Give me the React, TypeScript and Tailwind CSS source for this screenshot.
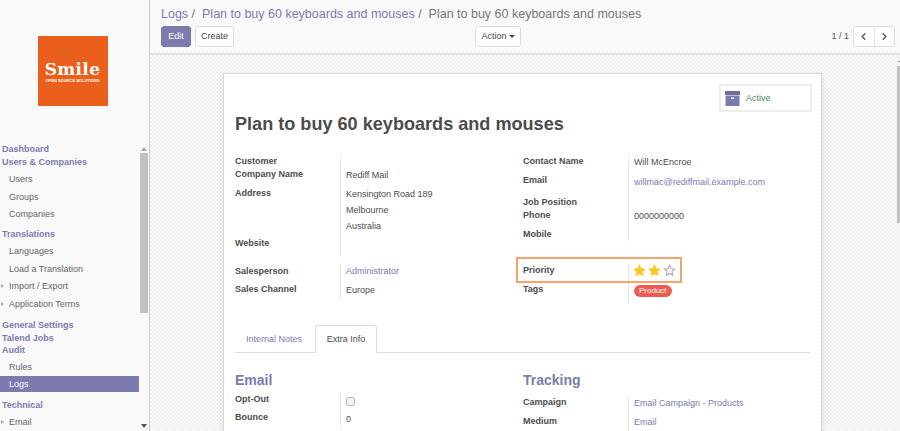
import { ChevronLeft, ChevronRight } from 'lucide-react'

const font = { fontFamily: '"Liberation Sans", Arial, sans-serif' }

function NavHead({ children }: { children: string }) {
  return <div className="h-[12.5px] pl-[2px] text-[9px] font-bold leading-[12.5px] text-[#7c7bad]">{children}</div>
}

function NavItem({ children, arrow, active }: { children: string; arrow?: boolean; active?: boolean }) {
  return (
    <div className={active ? 'mb-[1.5px] h-[16px] bg-[#7c7bad] pl-[9px] text-[9px] leading-[16px] text-white' : 'relative h-[17.5px] pl-[9px] text-[9px] leading-[17px] text-[#666]'}>
      {arrow && <span className="absolute left-[1px] top-[6px] h-0 w-0 border-y-[2.5px] border-l-[3px] border-y-transparent border-l-[#aaa]" />}
      {children}
    </div>
  )
}

function Sidebar() {
  return (
    <aside className="flex h-full w-[150px] shrink-0 flex-col border-r border-[#ccc] bg-[#f9f9f9]">
      <div className="flex h-[143px] shrink-0 items-start justify-center pr-[4px] pt-[36px]">
        <div className="flex h-[70px] w-[70px] flex-col items-center justify-center bg-[#ea5f1c] pt-[2px] text-white">
          <div className="text-[17px] font-bold leading-[17px] tracking-[0.3px]" style={{ fontFamily: '"DejaVu Serif", serif' }}>Smile</div>
          <div className="whitespace-nowrap text-[4px] font-bold leading-[6px]">OPEN SOURCE SOLUTIONS</div>
        </div>
      </div>
      <div className="flex min-h-0 flex-1">
        <nav className="w-[139px] shrink-0">
          <NavHead>Dashboard</NavHead>
          <NavHead>Users &amp; Companies</NavHead>
          <div className="mt-[3px]">
            <NavItem>Users</NavItem>
            <NavItem>Groups</NavItem>
            <NavItem>Companies</NavItem>
          </div>
          <div className="mt-[4px]"><NavHead>Translations</NavHead></div>
          <div className="mt-[3px]">
            <NavItem>Languages</NavItem>
            <NavItem>Load a Translation</NavItem>
            <NavItem arrow>Import / Export</NavItem>
            <NavItem arrow>Application Terms</NavItem>
          </div>
          <div className="mt-[6px]">
            <NavHead>General Settings</NavHead>
            <NavHead>Talend Jobs</NavHead>
            <NavHead>Audit</NavHead>
          </div>
          <div className="mt-[2px]">
            <NavItem>Rules</NavItem>
            <NavItem active>Logs</NavItem>
          </div>
          <div className="mt-[7px]"><NavHead>Technical</NavHead></div>
          <div className="mt-[2px]"><NavItem arrow>Email</NavItem></div>
        </nav>
        <div className="flex w-[10px] shrink-0 flex-col items-center pr-[1px] pt-[1px]">
          <div className="mt-[3px] h-0 w-0 border-x-[3px] border-b-[4px] border-x-transparent border-b-[#aaa]" />
          <div className="mt-[2px] h-[160px] w-[8px] shrink-0 bg-[#c1c1c1]" />
          <div className="flex-1" />
          <div className="mb-[3px] h-0 w-0 border-x-[3px] border-t-[4px] border-x-transparent border-t-[#555]" />
        </div>
      </div>
    </aside>
  )
}

function Button({ children, className = '' }: { children: React.ReactNode; className?: string }) {
  return (
    <div className={`flex h-[21px] items-center justify-center rounded-[3px] border text-[9px] ${className}`}>
      {children}
    </div>
  )
}

function ControlPanel() {
  return (
    <header className="h-[55px] shrink-0 border-b-2 border-[#e2e2e2] bg-[#f9f9f9] pl-[11px] pr-[5px]">
      <div className="flex h-[26px] items-center whitespace-pre pt-[3px] text-[12.5px] text-[#7c7bad]">
        <span>Logs</span>
        <span className="text-[#777]"> /  </span>
        <span>Plan to buy 60 keyboards and mouses</span>
        <span className="text-[#777]"> /  </span>
        <span className="text-[#777]">Plan to buy 60 keyboards and mouses</span>
      </div>
      <div className="flex h-[21px] items-center">
        <Button className="w-[30px] border-[#7c7bad] bg-[#7c7bad] text-white">Edit</Button>
        <Button className="ml-[4px] w-[39px] border-[#dcdcdc] bg-white text-[#444]">Create</Button>
        <Button className="ml-[241px] w-[46px] border-[#dcdcdc] bg-white text-[#444]">
          Action
          <span className="ml-[2px] h-0 w-0 border-x-[3px] border-t-[3px] border-x-transparent border-t-[#444]" />
        </Button>
        <div className="ml-auto mr-[4px] text-[9px] text-[#555]">1 / 1</div>
        <div className="flex h-[21px] w-[42px] rounded-[3px] border border-[#dcdcdc] bg-white text-[#555]">
          <div className="flex flex-1 items-center justify-center border-r border-[#e5e5e5]"><ChevronLeft size={11} strokeWidth={3} /></div>
          <div className="flex flex-1 items-center justify-center"><ChevronRight size={11} strokeWidth={3} /></div>
        </div>
      </div>
    </header>
  )
}

function Field({ label, h, labelTop = 0, valueTop = 0, children }: { label?: string; h: number; labelTop?: number; valueTop?: number; children?: React.ReactNode }) {
  return (
    <div className="flex" style={{ height: h }}>
      <div className="w-[105px] shrink-0 text-[9px] font-bold leading-[13px] text-[#4c4c4c]" style={{ paddingTop: labelTop }}>{label}</div>
      <div className="flex-1 border-l border-[#e8e8e8] pl-[5px] text-[9px] leading-[13px] text-[#4c4c4c]" style={{ paddingTop: valueTop }}>{children}</div>
    </div>
  )
}

function Star({ filled }: { filled?: boolean }) {
  return (
    <svg width="13" height="13" viewBox="0 0 24 24" fill={filled ? '#fbc91e' : 'none'} stroke={filled ? '#fbc91e' : '#aaa'} strokeWidth="2">
      <path d="M12 2.5l2.9 6.2 6.7.8-5 4.6 1.4 6.7-6-3.4-6 3.4 1.4-6.7-5-4.6 6.7-.8z" />
    </svg>
  )
}

function Sheet() {
  return (
    <div className="relative ml-[73px] h-[400px] w-[599px] border border-[#d8d8d8] bg-white px-[11px] shadow-[0_2px_6px_rgba(0,0,0,0.12)]">
      <div className="absolute right-[9px] top-[10px] flex h-[28px] w-[93px] items-center border-2 border-[#eee] pl-[4px] text-[9px] text-[#4c8c5c]">
        <svg width="15" height="15" viewBox="0 0 15 15" className="mr-[6px]">
          <rect x="0" y="0" width="15" height="4" fill="#6e6d9c" />
          <rect x="0.5" y="4.5" width="14" height="10.5" fill="#7c7bad" />
          <rect x="6" y="6.5" width="3" height="1.5" fill="#fff" />
        </svg>
        <span className="pt-[2px]">Active</span>
      </div>
      <h1 className="pt-[38px] text-[18.1px] font-bold leading-[24px] text-[#4c4c4c]">Plan to buy 60 keyboards and mouses</h1>
      <div className="mt-[19px] grid grid-cols-[288px_288px]">
        <div>
          <Field label="Customer" h={13} />
          <Field label="Company Name" h={18} valueTop={1}>Rediff Mail</Field>
          <Field label="Address" h={51} labelTop={1}>
            <div className="leading-[16px]">Kensington Road 189<br />Melbourne<br />Australia</div>
          </Field>
          <Field label="Website" h={19} />
          <div className="h-[8px]" />
          <Field label="Salesperson" h={18} labelTop={1} valueTop={1}><span className="text-[#7c7bad]">Administrator</span></Field>
          <Field label="Sales Channel" h={18} labelTop={1} valueTop={2}>Europe</Field>
        </div>
        <div>
          <Field label="Contact Name" h={19} valueTop={1}>Will McEncroe</Field>
          <Field label="Email" h={22} valueTop={2}><span className="text-[#7c7bad]">willmac@rediffmail.example.com</span></Field>
          <Field label="Job Position" h={13} />
          <Field label="Phone" h={19} valueTop={1}>0000000000</Field>
          <Field label="Mobile" h={13} />
          <div className="h-[23px]" />
          <div className="relative">
            <div className="absolute left-[-7px] top-[-7px] h-[26px] w-[166px] border-2 border-[#f6a26a]" />
            <Field label="Priority" h={19}>
              <span className="ml-[-1px] flex gap-[2px]"><Star filled /><Star filled /><Star /></span>
            </Field>
            <Field label="Tags" h={21}>
              <span className="mt-[2px] inline-block rounded-[6px] bg-[#ee5c50] px-[5px] text-[8px] leading-[12px] text-white">Product</span>
            </Field>
          </div>
        </div>
      </div>
      <div className="mt-[21px] flex h-[28px] border-b border-[#ddd]">
        <div className="w-[80px] pl-[11px] pt-[8px] text-[9px] text-[#7c7bad]">Internal Notes</div>
        <div className="h-[28px] w-[62px] rounded-t-[3px] border border-[#ddd] border-b-white bg-white pt-[7px] text-center text-[9px] text-[#4c4c4c]">Extra Info</div>
      </div>
      <div className="mt-[18px] grid grid-cols-[288px_288px]">
        <div>
          <div className="mb-[4px] h-[18px] text-[14px] font-bold leading-[18px] text-[#7c7bad]">Email</div>
          <Field label="Opt-Out" h={18}>
            <span className="mt-[4px] block h-[9px] w-[9px] rounded-[2px] border border-[#bbb] bg-[#f4f4f4]" />
          </Field>
          <Field label="Bounce" h={18} valueTop={2}>0</Field>
        </div>
        <div>
          <div className="mb-[7px] h-[18px] text-[14px] font-bold leading-[18px] text-[#7c7bad]">Tracking</div>
          <Field label="Campaign" h={19} valueTop={1}><span className="text-[#7c7bad]">Email Campaign - Products</span></Field>
          <Field label="Medium" h={18} valueTop={1}><span className="text-[#7c7bad]">Email</span></Field>
        </div>
      </div>
    </div>
  )
}

export default function App() {
  return (
    <div className="flex h-[431px] w-[900px] overflow-hidden bg-white" style={font}>
      <Sidebar />
      <main className="flex min-w-0 flex-1 flex-col">
        <ControlPanel />
        <div className="flex min-h-0 flex-1 bg-[repeating-conic-gradient(#f1f1f1_0_25%,#fafafa_0_50%)] bg-[length:4px_4px]">
          <div className="min-w-0 flex-1 overflow-hidden pt-[18px]">
            <Sheet />
          </div>
          <div className="flex w-[4px] shrink-0 flex-col items-end bg-[#f4f4f4] pt-[6px]">
            <div className="h-[1px] w-[2px] bg-[#888]" />
            <div className="mt-[4px] h-[157px] w-[3px] bg-[#c1c1c1]" />
          </div>
        </div>
      </main>
    </div>
  )
}
